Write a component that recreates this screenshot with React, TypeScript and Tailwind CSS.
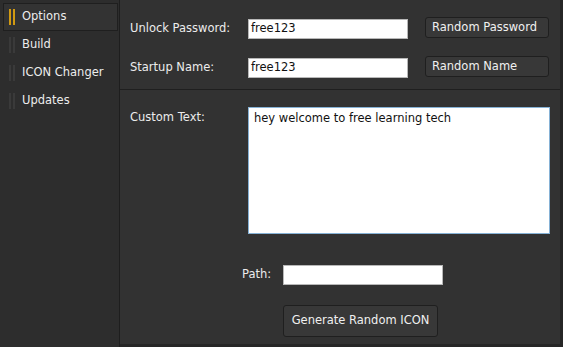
import React from "react";

const items = ["Options", "Build", "ICON Changer", "Updates"];

function Bars({ active }: { active: boolean }) {
  const c = active ? "bg-[#d19a12]" : "bg-[#3a3a3a]";
  return (
    <div className="flex gap-[2px] h-[16px]">
      <div className={`w-[2px] h-full ${c}`} />
      <div className={`w-[2px] h-full ${c}`} />
    </div>
  );
}

export default function App() {
  return (
    <div
      className="w-[563px] h-[347px] bg-[#2b2b2b] flex text-[11.5px] text-[#ececec] overflow-hidden"
      style={{ fontFamily: "'DejaVu Sans', Verdana, sans-serif" }}
    >
      {/* Sidebar */}
      <div className="w-[120px] h-full border-r border-[#1e1e1e] bg-[#2d2d2d] pt-[3px] pl-[3px] pr-[1px] flex flex-col">
        {items.map((it, i) => (
          <div
            key={it}
            className={`h-[28px] flex items-center gap-[7px] pl-[5px] ${
              i === 0 ? "bg-[#333333] border border-[#1f1f1f] h-[27px]" : "border border-transparent"
            }`}
          >
            <Bars active={i === 0} />
            <span className="leading-none">{it}</span>
          </div>
        ))}
      </div>
      {/* Main */}
      <div className="flex-1 h-full bg-[#323232] border-b-[3px] border-r-[3px] border-[#262626] flex flex-col">
        <div className="flex flex-col gap-[19px] pt-[19px] pl-[10px] pb-[11px] border-b border-[#1f1f1f]">
          <div className="flex items-start h-[20px]">
            <span className="w-[118px] h-[20px] flex items-center">Unlock Password:</span>
            <div className="w-[160px] h-[20px] bg-white border border-[#b8b8b8] text-[#111] flex items-center pl-[2px]">free123</div>
            <button className="ml-[17px] w-[124px] h-[21px] -mt-[2px] bg-[#383838] border border-[#1f1f1f] rounded-[3px] text-left pl-[6px] text-[#f0f0f0]">
              Random Password
            </button>
          </div>
          <div className="flex items-start h-[20px]">
            <span className="w-[118px] h-[20px] flex items-center">Startup Name:</span>
            <div className="w-[160px] h-[20px] bg-white border border-[#b8b8b8] text-[#111] flex items-center pl-[2px]">free123</div>
            <button className="ml-[17px] w-[124px] h-[21px] -mt-[2px] bg-[#383838] border border-[#1f1f1f] rounded-[3px] text-left pl-[6px] text-[#f0f0f0]">
              Random Name
            </button>
          </div>
        </div>
        <div className="flex pl-[10px] pt-[17px]">
          <span className="w-[118px] pt-[2px]">Custom Text:</span>
          <div className="w-[302px] h-[127px] bg-white border border-[#86b2d6] text-[#111] pl-[5px] pt-[2px]">
            hey welcome to free learning tech
          </div>
        </div>
        <div className="flex items-center pl-[122px] pt-[31px]">
          <span className="w-[41px]">Path:</span>
          <div className="w-[160px] h-[20px] bg-white border border-[#b8b8b8]" />
        </div>
        <div className="pl-[163px] pt-[20px]">
          <button className="w-[155px] h-[32px] bg-[#383838] border border-[#1f1f1f] rounded-[3px] text-[#f0f0f0]">
            Generate Random ICON
          </button>
        </div>
      </div>
    </div>
  );
}
